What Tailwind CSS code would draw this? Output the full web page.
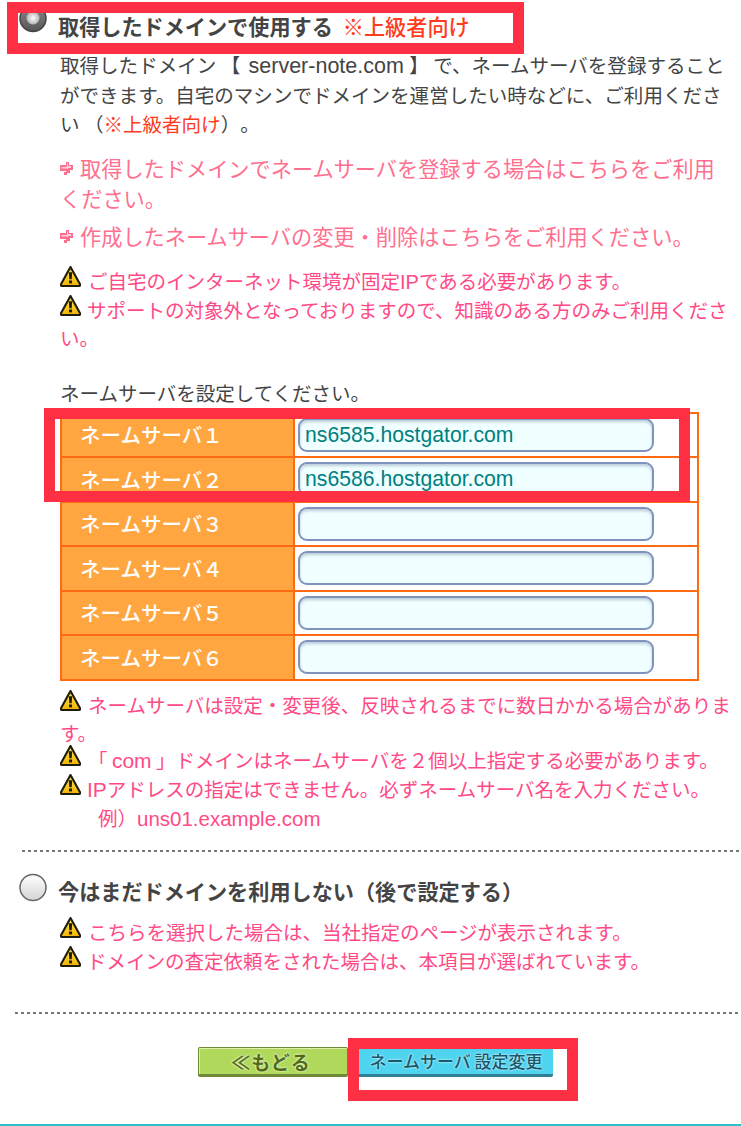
<!DOCTYPE html>
<html lang="ja">
<head>
  <meta charset="UTF-8" />
  <meta name="viewport" content="width=device-width, initial-scale=1" />
  <title>ネームサーバ設定</title>
  <script src="https://cdn.jsdelivr.net/npm/@tailwindcss/browser@4"></script>
</head>
<body class="bg-white font-['Noto_Sans_CJK_JP','Noto_Sans',sans-serif] [text-spacing-trim:space-all] text-[#444] h-[1126px] overflow-hidden relative">

  <svg width="0" height="0" class="absolute">
    <defs>
      <linearGradient id="tri" x1="0" y1="0" x2="0" y2="1"><stop offset="0" stop-color="#ffe75a"/><stop offset="1" stop-color="#f2b400"/></linearGradient>
      <linearGradient id="off" x1="0" y1="0" x2="0" y2="1"><stop offset="0" stop-color="#ffffff"/><stop offset="1" stop-color="#d4d4d4"/></linearGradient>
      <linearGradient id="on" x1="0" y1="0" x2="0" y2="1"><stop offset="0" stop-color="#8a8a8a"/><stop offset="1" stop-color="#555555"/></linearGradient>
      <radialGradient id="dot"><stop offset="0" stop-color="#ffffff"/><stop offset="1" stop-color="#b5b5b5"/></radialGradient>
      <symbol id="warn" viewBox="0 0 22 22">
        <path d="M11 1 L21 19 Q21.6 21 19.5 21 H2.5 Q0.4 21 1 19 Z" fill="url(#tri)" stroke="#1c1c10" stroke-width="2.2" stroke-linejoin="round"/>
        <path d="M9.2 6.5h3.6l-.6 7.5h-2.4z" fill="#1c1c10"/>
        <rect x="9.4" y="15.2" width="3.2" height="3" fill="#1c1c10"/>
      </symbol>
      <symbol id="arrow" viewBox="0 0 13 13">
        <path d="M6 0h3v3h4v5h-3v3H7v2H4v-3h2V9H0V3h6z" fill="#ff6f8f"/>
        <path d="M7 1.5h1V4h3v2H8v1H7V5H1.5v1.5H7z" fill="#ffd0da"/>
      </symbol>
    </defs>
  </svg>

  <!-- option 1 -->
  <div class="h-[52px] pl-[19px] flex items-center gap-[11px]">
    <svg class="w-[28px] h-[29px] mb-[15px] shrink-0" viewBox="0 0 28 29">
      <circle cx="14" cy="14.5" r="13" fill="url(#on)" stroke="#444" stroke-width="1.5"/>
      <circle cx="14" cy="14" r="6.5" fill="url(#dot)"/>
    </svg>
    <div class="-mt-[2px] text-[21.15px] font-bold leading-[29px] whitespace-nowrap">取得したドメインで使用する<span class="ml-[10px] text-[#ff3b20] font-medium">※上級者向け</span></div>
  </div>

  <div class="-mt-[2px] pl-[60px] text-[19.55px] leading-[29.5px] whitespace-nowrap">
    <p>取得したドメイン 【 <span class="ml-[4px] mr-[1px] font-['Liberation_Sans'] text-[21.5px] leading-none">server-note.com</span> 】 で、ネームサーバを登録すること</p>
    <p>ができます。自宅のマシンでドメインを運営したい時などに、ご利用くださ</p>
    <p>い （<span class="text-[#ff3b20]">※上級者向け</span>）。</p>
  </div>

  <div class="mt-[14.5px] pl-[60px] text-[#ff6f8f] text-[21.2px] leading-[30px] whitespace-nowrap">
    <p class="flex items-center gap-[7px]"><svg class="w-[13px] h-[13px]"><use href="#arrow"/></svg>取得したドメインでネームサーバを登録する場合はこちらをご利用</p>
    <p>ください。</p>
    <p class="mt-[8px] flex items-center gap-[7px]"><svg class="w-[13px] h-[13px]"><use href="#arrow"/></svg>作成したネームサーバの変更・削除はこちらをご利用ください。</p>
  </div>

  <div class="mt-[16px] pl-[60px] text-[#ff4a86] text-[19.5px] leading-[28.5px] whitespace-nowrap">
    <p class="flex items-center gap-[7px]"><svg class="w-[21px] h-[21px] -mt-[9px]"><use href="#warn"/></svg><span>ご自宅のインターネット環境が固定<span class="font-['Liberation_Sans'] text-[20px] leading-none">IP</span>である必要があります。</span></p>
    <p class="flex items-center gap-[6px]"><svg class="w-[21px] h-[21px] -mt-[9px]"><use href="#warn"/></svg>サポートの対象外となっておりますので、知識のある方のみご利用くださ</p>
    <p>い。</p>
  </div>

  <p class="mt-[25.5px] pl-[60px] text-[19.5px] leading-[29px]">ネームサーバを設定してください。</p>

  <table class="mt-[4.5px] ml-[60px] w-[639px] border-collapse table-fixed">
    <tbody class="text-[20.5px] font-medium">
      <tr class="h-[44.5px]">
        <th class="w-[233px] border-2 border-[#ff6a13] bg-[#ffa640] text-white text-left font-medium pl-[18px]">ネームサーバ１</th>
        <td class="border-2 border-[#ff6a13] pl-[3px]"><input type="text" value="ns6585.hostgator.com" class="block w-[356px] h-[34px] rounded-[9px] border-2 border-[#7f93bd] bg-[#f0ffff] pl-[5px] text-[#008080] text-[21.2px] font-['Liberation_Sans',sans-serif] font-normal shadow-[inset_0_2px_3px_rgba(90,110,150,0.35)]" /></td>
      </tr>
      <tr class="h-[44.5px]">
        <th class="border-2 border-[#ff6a13] bg-[#ffa640] text-white text-left font-medium pl-[18px]">ネームサーバ２</th>
        <td class="border-2 border-[#ff6a13] pl-[3px]"><input type="text" value="ns6586.hostgator.com" class="block w-[356px] h-[34px] rounded-[9px] border-2 border-[#7f93bd] bg-[#f0ffff] pl-[5px] text-[#008080] text-[21.2px] font-['Liberation_Sans',sans-serif] font-normal shadow-[inset_0_2px_3px_rgba(90,110,150,0.35)]" /></td>
      </tr>
      <tr class="h-[44.5px]">
        <th class="border-2 border-[#ff6a13] bg-[#ffa640] text-white text-left font-medium pl-[18px]">ネームサーバ３</th>
        <td class="border-2 border-[#ff6a13] pl-[3px]"><input type="text" class="block w-[356px] h-[34px] rounded-[9px] border-2 border-[#7f93bd] bg-[#f0ffff] shadow-[inset_0_2px_3px_rgba(90,110,150,0.35)]" /></td>
      </tr>
      <tr class="h-[44.5px]">
        <th class="border-2 border-[#ff6a13] bg-[#ffa640] text-white text-left font-medium pl-[18px]">ネームサーバ４</th>
        <td class="border-2 border-[#ff6a13] pl-[3px]"><input type="text" class="block w-[356px] h-[34px] rounded-[9px] border-2 border-[#7f93bd] bg-[#f0ffff] shadow-[inset_0_2px_3px_rgba(90,110,150,0.35)]" /></td>
      </tr>
      <tr class="h-[44.5px]">
        <th class="border-2 border-[#ff6a13] bg-[#ffa640] text-white text-left font-medium pl-[18px]">ネームサーバ５</th>
        <td class="border-2 border-[#ff6a13] pl-[3px]"><input type="text" class="block w-[356px] h-[34px] rounded-[9px] border-2 border-[#7f93bd] bg-[#f0ffff] shadow-[inset_0_2px_3px_rgba(90,110,150,0.35)]" /></td>
      </tr>
      <tr class="h-[44.5px]">
        <th class="border-2 border-[#ff6a13] bg-[#ffa640] text-white text-left font-medium pl-[18px]">ネームサーバ６</th>
        <td class="border-2 border-[#ff6a13] pl-[3px]"><input type="text" class="block w-[356px] h-[34px] rounded-[9px] border-2 border-[#7f93bd] bg-[#f0ffff] shadow-[inset_0_2px_3px_rgba(90,110,150,0.35)]" /></td>
      </tr>
    </tbody>
  </table>

  <div class="mt-[10px] pl-[60px] text-[#ff4a86] text-[19.5px] leading-[28.75px] whitespace-nowrap">
    <p class="flex items-center gap-[7px]"><svg class="w-[21px] h-[21px] -mt-[9px]"><use href="#warn"/></svg>ネームサーバは設定・変更後、反映されるまでに数日かかる場合がありま</p>
    <p>す。</p>
    <p class="-mt-[2px] flex items-center gap-[7px]"><svg class="w-[21px] h-[21px] -mt-[9px]"><use href="#warn"/></svg><span>「 <span class="font-['Liberation_Sans'] text-[21px] leading-none">com</span> 」ドメインはネームサーバを２個以上指定する必要があります。</span></p>
    <p class="flex items-center gap-[6px]"><svg class="w-[21px] h-[21px] -mt-[9px]"><use href="#warn"/></svg><span><span class="font-['Liberation_Sans'] text-[21px] leading-none">IP</span>アドレスの指定はできません。必ずネームサーバ名を入力ください。</span></p>
    <p class="pl-[38px]">例）<span class="font-['Liberation_Sans'] text-[20.5px] leading-none">uns01.example.com</span></p>
  </div>

  <div class="mt-[17.25px] ml-[22px] h-[2px] bg-[repeating-linear-gradient(90deg,#777_0_3px,transparent_3px_6px)]"></div>

  <!-- option 2 -->
  <div class="mt-[21px] pl-[19px] h-[29px] flex items-center gap-[11px]">
    <svg class="w-[28px] h-[29px] shrink-0" viewBox="0 0 28 29">
      <circle cx="14" cy="14.5" r="13" fill="url(#off)" stroke="#666" stroke-width="1.5"/>
    </svg>
    <div class="text-[21.15px] font-bold leading-[29px] mt-[6px] whitespace-nowrap">今はまだドメインを利用しない（後で設定する）</div>
  </div>

  <div class="mt-[15.5px] pl-[60px] text-[#ff4a86] text-[19.5px] leading-[29px] whitespace-nowrap">
    <p class="flex items-center gap-[7px]"><svg class="w-[21px] h-[21px] -mt-[9px]"><use href="#warn"/></svg>こちらを選択した場合は、当社指定のページが表示されます。</p>
    <p class="flex items-center gap-[6px]"><svg class="w-[21px] h-[21px] -mt-[9px]"><use href="#warn"/></svg>ドメインの査定依頼をされた場合は、本項目が選ばれています。</p>
  </div>

  <div class="mt-[37px] ml-[15px] h-[2px] bg-[repeating-linear-gradient(90deg,#777_0_3px,transparent_3px_6px)]"></div>

  <div class="mt-[33px] ml-[198px] flex">
    <button class="w-[150px] h-[30px] pr-[4px] bg-[#b0d95c] border border-[#6e8a38] border-b-[3px] rounded-[2px] shadow-[inset_1px_1px_0_#dff0a8] text-[#4f6b1a] text-[19px] leading-none font-bold tracking-[1px] [text-shadow:0_0_2px_#f2f9cf,0_0_2px_#f2f9cf]">≪もどる</button>
    <button class="w-[205px] h-[30px] pl-[11px] bg-[#4fd4f0] border-b-[3px] border-[#2f7f98] rounded-[2px] text-[#16586e] text-[17px] leading-none font-medium whitespace-nowrap [text-shadow:0_0_2px_#c8f0f8,0_0_2px_#c8f0f8]">ネームサーバ 設定変更</button>
  </div>

  <div class="absolute left-0 right-0 top-[1124px] h-[2px] bg-[#2ebfc9]"></div>

  <!-- red annotation boxes drawn over the screenshot -->
  <div class="absolute left-[7px] top-[2px] w-[517px] h-[52px] border-[11px] border-[#ff3044]"></div>
  <div class="absolute left-[44px] top-[408px] w-[646px] h-[94px] border-[11px] border-[#ff3044]"></div>
  <div class="absolute left-[348px] top-[1038px] w-[230px] h-[63px] border-[11px] border-[#ff3044]"></div>
</body>
</html>
